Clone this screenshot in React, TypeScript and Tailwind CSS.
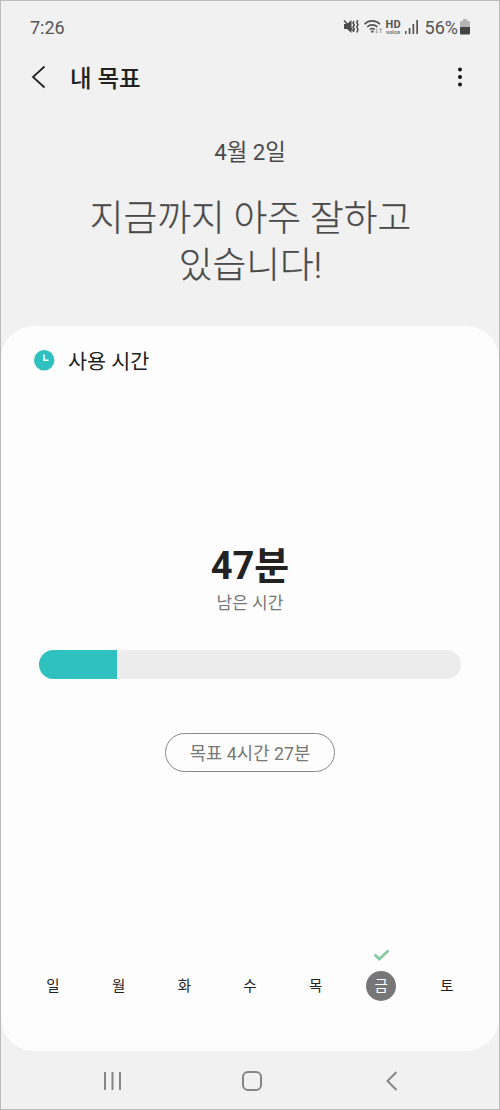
const DAYS = ["일", "월", "화", "수", "목", "금", "토"];
const TODAY = "금";

const StatusBar = () => (
  <div className="flex h-[52px] shrink-0 items-center justify-between pr-[29px] pl-[29px] text-[18px] text-[#555]">
    <span>7:26</span>
    <div className="flex items-center">
      <svg width="17" height="18" viewBox="0 0 17 18" className="mr-[4px]" fill="none" stroke="#4c4c4c">
        <path d="M1 6h3l4.500-4v13l-4.500-4H1z" fill="#4c4c4c" stroke="none" />
        <path d="M1 2.500l9 10" strokeWidth="1.500" />
        <path d="M11 3l-1 2 1.300 2-1.300 2 1.300 2-1 3M14.800 2l-1 2.500 1.200 2-1.200 2.500 1.200 2.500-1.200 3" strokeWidth="1.500" />
      </svg>
      <svg width="20" height="18" viewBox="0 0 20 18" className="mr-px" fill="none" stroke="#555" strokeWidth="1.600">
        <path d="M.5 6.200a10.800 10.800 0 0 1 15.500 0M3.200 9a7.200 7.200 0 0 1 10.200 0M5.800 11.600a3.800 3.800 0 0 1 5 0" />
        <circle cx="8.300" cy="13.500" r="1.200" fill="#555" stroke="none" />
        <path d="M12.700 10.500v4.500m-1.400-1.400 1.400 1.400 1.400-1.400M16.700 15v-4.500m-1.400 1.400 1.400-1.400 1.400 1.400" stroke="#aaa" strokeWidth="1" />
      </svg>
      <div className="mr-[3px] flex w-[17px] flex-col items-center font-bold">
        <span className="text-[11px] leading-[9px]">HD</span>
        <span className="text-[6px] leading-[6px] text-[#777]">voice</span>
      </div>
      <svg width="14" height="14" viewBox="0 0 14 14" className="mr-[6px]" fill="#555">
        <path d="M0 11h1.500v3H0zM3.700 8h1.700v6H3.700zM7.500 4h1.700v10H7.500zM11.300 0H13v14h-1.700z" />
      </svg>
      <span>56%</span>
      <svg width="10" height="16" viewBox="0 0 10 16" className="ml-[2px]">
        <path d="M3 0h4v2h2a1 1 0 0 1 1 1v5H0V3a1 1 0 0 1 1-1h2z" fill="#b5b5b5" />
        <path d="M0 8h10v6.500a1 1 0 0 1-1 1H1a1 1 0 0 1-1-1z" fill="#444" />
      </svg>
    </div>
  </div>
);

const Header = () => (
  <header className="flex h-[48px] shrink-0 items-center pr-[36px] pl-[30px]">
    <svg width="15" height="24" viewBox="0 0 15 24" fill="none" stroke="#222" strokeWidth="1.800">
      <path d="M13.500 1.500 2 12l11.500 10.500" />
    </svg>
    <h1 className="mt-[3px] ml-[24px] flex-1 text-[23.5px] leading-[32px] font-medium text-[#222]">내 목표</h1>
    <svg width="6" height="22" viewBox="0 0 6 22" fill="#111">
      <circle cx="3" cy="3.500" r="2" />
      <circle cx="3" cy="11" r="2" />
      <circle cx="3" cy="18.500" r="2" />
    </svg>
  </header>
);

const WeekRow = () => (
  <div className="mt-auto mb-[50px] flex justify-between px-[37px]">
    {DAYS.map((day) => (
      <div key={day} className="flex w-[30px] flex-col items-center">
        <svg width="17" height="12" viewBox="0 0 17 12" className="mb-[10px]" fill="none">
          {day === TODAY && <path d="M1.500 5.500 6.300 10 15.500 1.500" stroke="#86cba4" strokeWidth="2.800" />}
        </svg>
        <span
          className={
            day === TODAY
              ? "flex size-[30px] items-center justify-center rounded-full bg-[#777] pt-[2px] text-[14.5px] text-white"
              : "flex size-[30px] items-center justify-center pt-[2px] text-[14.5px] text-[#222]"
          }
        >
          {day}
        </span>
      </div>
    ))}
  </div>
);

const UsageCard = () => (
  <main className="flex h-[725px] shrink-0 flex-col rounded-[33px] bg-[#fdfdfd]">
    <div className="mt-[19px] flex h-[30px] items-center pl-[33px]">
      <svg width="21" height="21" viewBox="0 0 21 21" fill="none">
        <circle cx="10.200" cy="10.200" r="10.200" fill="#2fc0c0" />
        <path d="M10 4.500v5.700h4.500" stroke="#fff" strokeWidth="1.600" />
      </svg>
      <h2 className="mt-[3px] ml-[13px] text-[20.700px] leading-[30px] text-[#222]">사용 시간</h2>
    </div>
    <p className="mt-[166px] text-center text-[38px] leading-[50px] font-bold text-[#222]">47분</p>
    <p className="text-center text-[17px] leading-[24px] text-[#777]">남은 시간</p>
    <div className="mx-[38px] mt-[35px] h-[29px] overflow-hidden rounded-full bg-[#ececec]">
      <div className="h-full w-[78px] bg-[#2fc0c0]" />
    </div>
    <button className="mt-[54px] ml-[164px] h-[39px] w-[170px] rounded-full border border-[#888] pt-px text-[17.8px] leading-[37px] text-[#777]">
      목표 4시간 27분
    </button>
    <WeekRow />
  </main>
);

const NavBar = () => (
  <nav className="flex flex-1 items-center pt-px pl-[102px]">
    <svg width="298" height="22" viewBox="0 0 298 22" fill="none" stroke="#868686" strokeWidth="2">
      <path d="M2 2v18M9.500 2v18M17 2v18" />
      <rect x="140" y="2" width="18" height="18" rx="5" />
      <path d="M293.500 2l-9 9 9 9" />
    </svg>
  </nav>
);

export default function App() {
  return (
    <div className="flex h-[1110px] w-[500px] flex-col overflow-hidden border border-[#bbb] bg-[#f1f1f1] font-[Roboto,'Noto_Sans_CJK_KR',sans-serif]">
      <StatusBar />
      <Header />
      <section className="h-[225px] shrink-0 text-center text-[#4a4a4a]">
        <p className="mt-[34px] text-[22.3px] leading-[34px]">4월 2일</p>
        <p className="mt-[26px] pl-px text-[36.7px] leading-[47px] font-light [-webkit-text-stroke:0.25px]">
          지금까지 아주 잘하고
          <br />
          있습니다!
        </p>
      </section>
      <UsageCard />
      <NavBar />
    </div>
  );
}
